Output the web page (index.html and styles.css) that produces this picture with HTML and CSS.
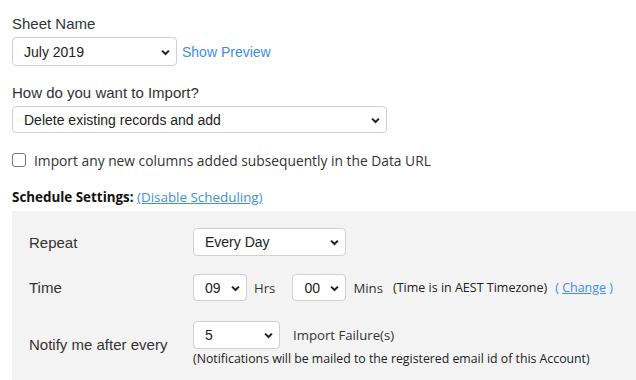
FILE: index.html
```html
<!DOCTYPE html>
<html lang="en">
<head>
   <meta charset="UTF-8">
   <meta name="viewport" content="width=device-width, initial-scale=1.0">
   <title>Import Settings</title>
   <link rel="stylesheet" href="styles.css">
</head>
<body>
<main class="page">
   <div class="field-label first">Sheet Name</div>
   <div class="row">
      <div class="select-wrap w-sheet">
         <select class="select"><option>July 2019</option></select>
         <svg class="chev" viewBox="0 0 10 7"><path d="M1.2 1.4 L5 5.2 L8.8 1.4"/></svg>
      </div>
      <a class="link preview" href="#">Show Preview</a>
   </div>

   <div class="field-label">How do you want to Import?</div>
   <div class="select-wrap w-import short">
      <select class="select"><option>Delete existing records and add</option></select>
      <svg class="chev" viewBox="0 0 10 7"><path d="M1.2 1.4 L5 5.2 L8.8 1.4"/></svg>
   </div>

   <label class="check-row">
      <span class="checkbox"></span>
      <span>Import any new columns added subsequently in the Data URL</span>
   </label>

   <div class="schedule-title">
      <b>Schedule Settings:</b> <a class="link" href="#">(Disable Scheduling)</a>
   </div>

   <section class="panel">
      <div class="prow">
         <div class="plabel">Repeat</div>
         <div class="select-wrap w-repeat">
            <select class="select"><option>Every Day</option></select>
            <svg class="chev" viewBox="0 0 10 7"><path d="M1.2 1.4 L5 5.2 L8.8 1.4"/></svg>
         </div>
      </div>

      <div class="prow time-row">
         <div class="plabel">Time</div>
         <div class="select-wrap w-time short">
            <select class="select"><option>09</option></select>
            <svg class="chev" viewBox="0 0 10 7"><path d="M1.2 1.4 L5 5.2 L8.8 1.4"/></svg>
         </div>
         <span class="unit">Hrs</span>
         <div class="select-wrap w-time short">
            <select class="select"><option>00</option></select>
            <svg class="chev" viewBox="0 0 10 7"><path d="M1.2 1.4 L5 5.2 L8.8 1.4"/></svg>
         </div>
         <span class="unit mins">Mins</span>
         <span class="note">(Time is in AEST Timezone)</span>
         <span class="note change">( <a class="link" href="#">Change</a> )</span>
      </div>

      <div class="prow notify-row">
         <div class="plabel">Notify me after every</div>
         <div class="notify">
            <div class="row">
               <div class="select-wrap w-notify">
                  <select class="select"><option>5</option></select>
                  <svg class="chev" viewBox="0 0 10 7"><path d="M1.2 1.4 L5 5.2 L8.8 1.4"/></svg>
               </div>
               <span class="unit failure">Import Failure(s)</span>
            </div>
            <div class="note small">(Notifications will be mailed to the registered email id of this Account)</div>
         </div>
      </div>
   </section>
</main>
</body>
</html>
```

FILE: styles.css
```css
body {
   margin: 0;
   font-family: "Liberation Sans", Arial, sans-serif;
   color: #333;
   background-color: #fff;
}
.page {
   padding-left: 12px;
}
.field-label {
   font-size: 15px;
   line-height: 20px;
   margin-top: 17px;
   margin-bottom: 3px;
}
.field-label.first {
   margin-top: 14px;
}
.row {
   display: flex;
   align-items: center;
}
.select-wrap {
   position: relative;
   height: 29px;
}
.select-wrap.short {
   height: 27px;
}
.select {
   appearance: none;
   -webkit-appearance: none;
   width: 100%;
   height: 100%;
   margin: 0;
   padding: 0 24px 0 11px;
   border: 1px solid #d0d0d0;
   border-radius: 4px;
   background-color: #fff;
   font-family: "Liberation Sans", Arial, sans-serif;
   font-size: 14px;
   color: #222;
}
.chev {
   position: absolute;
   right: 7px;
   top: 50%;
   width: 9px;
   height: 7px;
   margin-top: -3px;
   fill: none;
   stroke: #222;
   stroke-width: 2.2;
}
.w-sheet { width: 165px; }
.w-import { width: 375px; }
.w-repeat { width: 153px; height: 28px; }
.w-time { width: 54px; }
.w-notify { width: 87px; height: 28px; }

.link {
   color: #3e8ee6;
}
.preview {
   margin-left: 5px;
   text-decoration: none;
   font-size: 14px;
}
.check-row {
   display: flex;
   align-items: center;
   gap: 8px;
   margin-top: 17px;
   height: 20px;
   font-family: "Open Sans", sans-serif;
   font-size: 13.8px;
   color: #333;
}
.checkbox {
   width: 12px;
   height: 12px;
   border: 1px solid #777;
   border-radius: 3px;
   background: #fff;
}
.schedule-title {
   margin-top: 17px;
   line-height: 20px;
   font-family: "Open Sans", sans-serif;
   font-size: 13.4px;
   color: #111;
}
.schedule-title b {
   font-weight: 700;
}
.panel {
   margin-top: 4px;
   background-color: #f3f3f3;
   padding: 17px 0 16px 17px;
}
.prow {
   display: flex;
   align-items: center;
}
.time-row {
   margin-top: 18px;
}
.notify-row {
   margin-top: 20px;
}
.plabel {
   width: 164px;
   font-size: 15px;
   color: #333;
}
.unit {
   font-family: "Open Sans", sans-serif;
   font-size: 13.2px;
   color: #333;
   margin-left: 7px;
   margin-right: 17px;
}
.unit.mins {
   margin-right: 10px;
}
.unit.failure {
   margin-left: 13px;
}
.note {
   font-family: "Open Sans", sans-serif;
   font-size: 12.5px;
   color: #222;
}
.note.change {
   margin-left: 8px;
}
.note.change, .note.change .link {
   color: #3e8ee6;
}
.note.small {
   margin-top: 1px;
   font-size: 12.3px;
}
```
